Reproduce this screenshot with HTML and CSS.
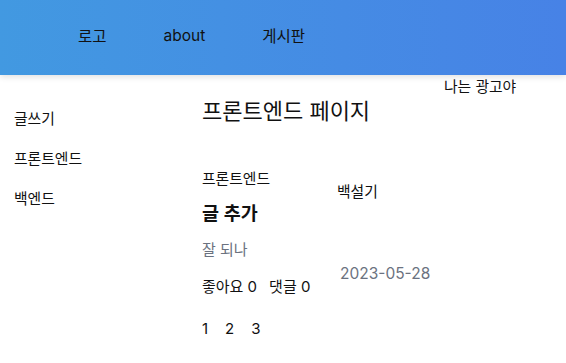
FILE: index.html
```html
<!DOCTYPE html>
<html lang="ko">
<head>
    <meta charset="UTF-8">
    <meta name="viewport" content="width=device-width, initial-scale=1.0">
    <title>프론트엔드 페이지</title>
    <link rel="stylesheet" href="styles.css">
</head>
<body>
    <header class="header">
        <nav class="nav">
            <a class="nav-link" href="#">로고</a>
            <a class="nav-link" href="#">about</a>
            <a class="nav-link" href="#">게시판</a>
        </nav>
    </header>
    <div class="layout">
        <aside class="sidebar">
            <a class="side-link" href="#">글쓰기</a>
            <a class="side-link" href="#">프론트엔드</a>
            <a class="side-link" href="#">백엔드</a>
        </aside>
        <main class="content">
            <h1 class="page-title">프론트엔드 페이지</h1>
            <div class="post">
                <div class="post-body">
                    <div class="post-category">프론트엔드</div>
                    <h2 class="post-title">글 추가</h2>
                    <p class="post-text">잘 되나</p>
                    <div class="post-meta">
                        <span>좋아요 0</span>
                        <span>댓글 0</span>
                    </div>
                </div>
                <div class="post-side">
                    <div class="post-author">백설기</div>
                    <div class="post-date">2023-05-28</div>
                </div>
            </div>
            <div class="pages">
                <a class="page-link" href="#">1</a>
                <a class="page-link" href="#">2</a>
                <a class="page-link" href="#">3</a>
            </div>
        </main>
        <aside class="ad">나는 광고야</aside>
    </div>
</body>
</html>
```

FILE: styles.css
```css
body {
    margin: 0;
    font-family: Inter, "Noto Sans CJK KR", sans-serif;
    color: #111;
    background: #fff;
}
a {
    color: inherit;
    text-decoration: none;
}
.header {
    height: 75px;
    background: linear-gradient(90deg, #4299e1, #4782e6);
    box-shadow: 0 2px 6px rgba(0, 0, 0, 0.12);
    position: relative;
}
.nav {
    display: flex;
    align-items: center;
    gap: 57px;
    height: 70px;
    padding-left: 78px;
    font-size: 15.5px;
}
.layout {
    display: flex;
}
.sidebar {
    width: 188px;
    padding: 24px 0 0 14px;
    display: flex;
    flex-direction: column;
    font-size: 14.8px;
}
.side-link {
    line-height: 40px;
}
.content {
    width: 242px;
    padding-top: 22px;
}
.page-title {
    margin: 0;
    font-size: 22px;
    font-weight: 400;
    line-height: 28px;
}
.post {
    display: flex;
    margin-top: 44px;
}
.post-body {
    width: 135px;
}
.post-category {
    font-size: 14.8px;
    line-height: 20px;
}
.post-title {
    margin: 11px 0 0;
    font-size: 18.5px;
    font-weight: 600;
    line-height: 26px;
}
.post-text {
    margin: 13px 0 0;
    font-size: 15px;
    line-height: 22px;
    color: #6b7280;
}
.post-meta {
    display: flex;
    gap: 12px;
    margin-top: 15px;
    font-size: 15px;
    line-height: 22px;
}
.post-side {
    padding-top: 13px;
}
.post-author {
    font-size: 14.8px;
    line-height: 20px;
}
.post-date {
    margin: 61px 0 0 3px;
    font-size: 15.5px;
    line-height: 22px;
    color: #6b7280;
}
.pages {
    display: flex;
    gap: 17px;
    margin-top: 20px;
    font-size: 15px;
    line-height: 22px;
}
.ad {
    padding-top: 2px;
    font-size: 14.8px;
    line-height: 20px;
}
```
